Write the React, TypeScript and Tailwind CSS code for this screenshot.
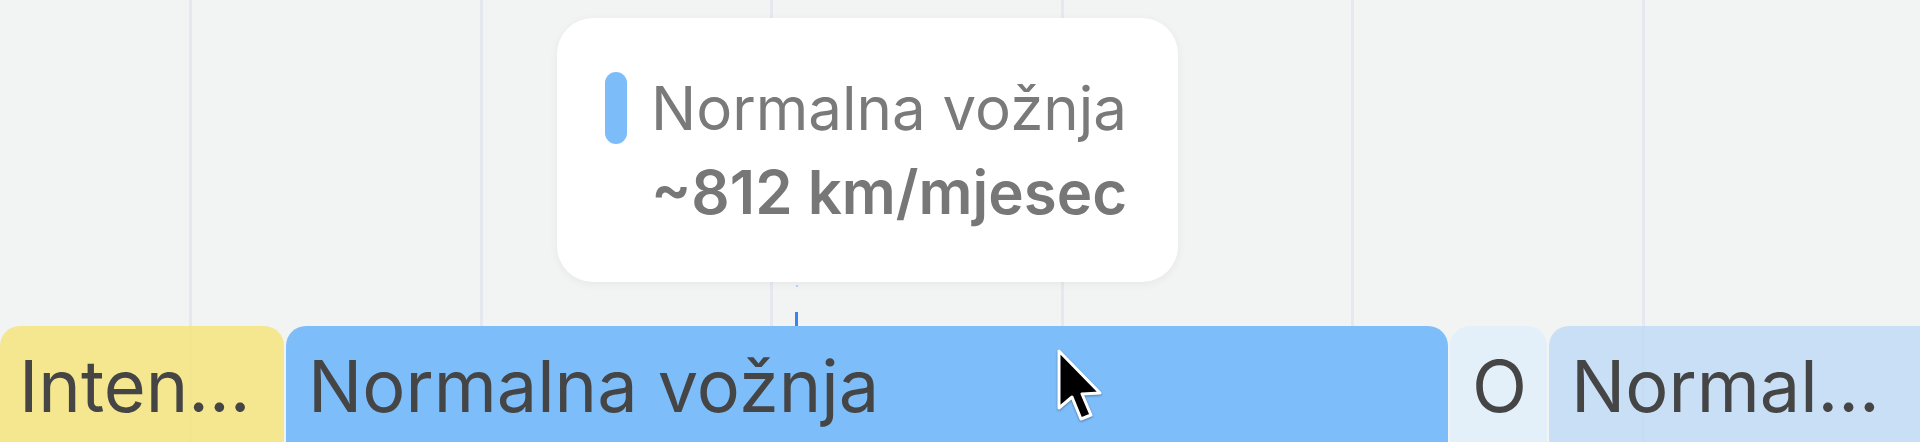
import React from "react";

type Segment = {
  label: string;
  width: string;
  tone: string;
  pad: string;
};

const segments: Segment[] = [
  { label: "Inten...", width: "w-[284px]", tone: "bg-[rgba(246,228,125,0.85)]", pad: "pl-[19px] pr-[22px]" },
  { label: "Normalna vožnja", width: "w-[1162px]", tone: "bg-[#7dbdf9]", pad: "px-[22px]" },
  { label: "O", width: "w-[97px]", tone: "bg-[rgba(224,238,250,0.85)]", pad: "px-[22px]" },
  { label: "Normal...", width: "w-[420px]", tone: "bg-[rgba(194,220,245,0.88)]", pad: "px-[22px]" },
];

const gridCells = [0, 1, 2, 3, 4, 5];

function Cursor() {
  return (
    <svg width="48" height="76" viewBox="-3 -3 48 76" className="block drop-shadow-[0_1px_1px_rgba(0,0,0,0.35)]">
      <path
        d="M0 0 L0 57 L13 46 L22 68 L32 64 L23 43 L41 42 Z"
        fill="#000"
        stroke="#fff"
        strokeWidth="3"
        strokeLinejoin="round"
      />
    </svg>
  );
}

export default function App() {
  return (
    <div
      className="relative w-[1920px] h-[442px] overflow-hidden bg-[#f2f3f3]"
      style={{ fontFamily: "Inter, 'Noto Sans', sans-serif" }}
    >
      {/* column guides */}
      <div className="absolute inset-0 flex">
        <div className="w-[189px] shrink-0" />
        {gridCells.map((i) => (
          <div key={i} className="w-[290.6px] shrink-0 border-l-[3px] border-[#e5e8ef]" />
        ))}
      </div>

      {/* timeline segments */}
      <div className="relative flex flex-col pt-[326px]">
        <div className="flex gap-[2px] h-[120px]">
          {segments.map((s) => (
            <div
              key={s.label}
              className={`${s.width} ${s.tone} ${s.pad} shrink-0 rounded-t-[20px] flex items-center overflow-hidden whitespace-nowrap text-[72px] text-[#454545]`}
            >
              {s.label}
            </div>
          ))}
        </div>
      </div>

      {/* hover marker */}
      <div className="absolute left-[795px] top-[312px] w-[3px] h-[14px] bg-[#3b82f6]" />
      <div className="absolute left-[796px] top-[285px] w-[2px] h-[2px] bg-[#b5d0f7]" />

      {/* tooltip */}
      <div className="absolute left-[557px] top-[18px] w-[621px] rounded-[36px] bg-white p-12 shadow-[0_2px_10px_rgba(0,0,0,0.05)]">
        <div className="flex items-center gap-6">
          <div className="w-[22px] h-[72px] rounded-full bg-[#7cbcf8] shrink-0" />
          <span className="text-[60px] leading-[84px] text-[#7a7a7a] whitespace-nowrap">Normalna vožnja</span>
        </div>
        <div className="pl-[46px] text-[60px] leading-[84px] font-semibold text-[#777777] whitespace-nowrap">
          ~812 km/mjesec
        </div>
      </div>

      {/* pointer */}
      <div className="absolute left-[1056px] top-[348px]">
        <Cursor />
      </div>
    </div>
  );
}
